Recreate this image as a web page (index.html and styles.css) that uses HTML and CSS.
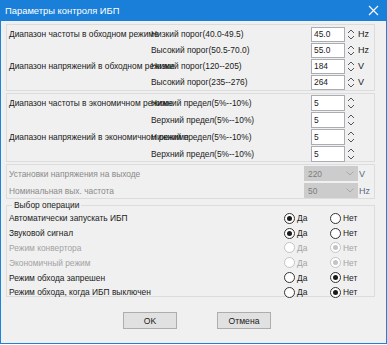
FILE: index.html
```html
<!DOCTYPE html>
<html lang="ru">
<head>
    <meta charset="UTF-8">
    <title>Параметры контроля ИБП</title>
    <link rel="stylesheet" href="styles.css">
</head>
<body>
    <div class="window">
        <div class="titlebar">
            <span class="title">Параметры контроля ИБП</span>
            <svg class="close" width="11" height="11" viewBox="0 0 11 11">
                <path d="M1 1L10 10M10 1L1 10" stroke="#fff" stroke-width="1.1" fill="none"/>
            </svg>
        </div>
        <div class="content">
            <div class="group bypass">
                <div class="row">
                    <span class="cap">Диапазон частоты в обходном режиме</span>
                    <span class="lbl">Низкий порог(40.0-49.5)</span>
                    <span class="field">45.0</span>
                    <svg class="spin" width="8" height="13" viewBox="0 0 8 13"><path d="M1 5L4 2L7 5M1 8L4 11L7 8" stroke="#555" fill="none"/></svg>
                    <span class="unit">Hz</span>
                </div>
                <div class="row">
                    <span class="cap"></span>
                    <span class="lbl">Высокий порог(50.5-70.0)</span>
                    <span class="field">55.0</span>
                    <svg class="spin" width="8" height="13" viewBox="0 0 8 13"><path d="M1 5L4 2L7 5M1 8L4 11L7 8" stroke="#555" fill="none"/></svg>
                    <span class="unit">Hz</span>
                </div>
                <div class="row">
                    <span class="cap">Диапазон напряжений в обходном режиме</span>
                    <span class="lbl">Низкий порог(120--205)</span>
                    <span class="field">184</span>
                    <svg class="spin" width="8" height="13" viewBox="0 0 8 13"><path d="M1 5L4 2L7 5M1 8L4 11L7 8" stroke="#555" fill="none"/></svg>
                    <span class="unit">V</span>
                </div>
                <div class="row">
                    <span class="cap"></span>
                    <span class="lbl">Высокий порог(235--276)</span>
                    <span class="field">264</span>
                    <svg class="spin" width="8" height="13" viewBox="0 0 8 13"><path d="M1 5L4 2L7 5M1 8L4 11L7 8" stroke="#555" fill="none"/></svg>
                    <span class="unit">V</span>
                </div>
            </div>

            <div class="group eco">
                <div class="row">
                    <span class="cap">Диапазон частоты в экономичном режиме</span>
                    <span class="lbl">Нижний предел(5%--10%)</span>
                    <span class="field">5</span>
                    <svg class="spin" width="8" height="14" viewBox="0 0 8 14"><path d="M1 5L4 2L7 5M1 9L4 12L7 9" stroke="#555" fill="none"/></svg>
                </div>
                <div class="row">
                    <span class="cap"></span>
                    <span class="lbl">Верхний предел(5%--10%)</span>
                    <span class="field">5</span>
                    <svg class="spin" width="8" height="14" viewBox="0 0 8 14"><path d="M1 5L4 2L7 5M1 9L4 12L7 9" stroke="#555" fill="none"/></svg>
                </div>
                <div class="row">
                    <span class="cap">Диапазон напряжений в экономичном режиме</span>
                    <span class="lbl">Нижний предел(5%--10%)</span>
                    <span class="field">5</span>
                    <svg class="spin" width="8" height="14" viewBox="0 0 8 14"><path d="M1 5L4 2L7 5M1 9L4 12L7 9" stroke="#555" fill="none"/></svg>
                </div>
                <div class="row">
                    <span class="cap"></span>
                    <span class="lbl">Верхний предел(5%--10%)</span>
                    <span class="field">5</span>
                    <svg class="spin" width="8" height="14" viewBox="0 0 8 14"><path d="M1 5L4 2L7 5M1 9L4 12L7 9" stroke="#555" fill="none"/></svg>
                </div>
            </div>

            <div class="group output">
                <div class="row">
                    <span class="cap">Установки напряжения на выходе</span>
                    <span class="combo">220<svg width="8" height="5" viewBox="0 0 8 5"><path d="M0.5 0.5L4 4L7.5 0.5" stroke="#a8a8a8" fill="none"/></svg></span>
                    <span class="unit">V</span>
                </div>
                <div class="row">
                    <span class="cap">Номинальная вых. частота</span>
                    <span class="combo">50<svg width="8" height="5" viewBox="0 0 8 5"><path d="M0.5 0.5L4 4L7.5 0.5" stroke="#a8a8a8" fill="none"/></svg></span>
                    <span class="unit">Hz</span>
                </div>
            </div>

            <fieldset class="ops">
                <legend>Выбор операции</legend>
                <div class="row">
                    <span class="cap">Автоматически запускать ИБП</span>
                    <span class="opt"><i class="radio on"></i>Да</span>
                    <span class="opt"><i class="radio"></i>Нет</span>
                </div>
                <div class="row">
                    <span class="cap">Звуковой сигнал</span>
                    <span class="opt"><i class="radio on"></i>Да</span>
                    <span class="opt"><i class="radio"></i>Нет</span>
                </div>
                <div class="row off">
                    <span class="cap">Режим конвертора</span>
                    <span class="opt"><i class="radio"></i>Да</span>
                    <span class="opt"><i class="radio on"></i>Нет</span>
                </div>
                <div class="row off">
                    <span class="cap">Экономичный режим</span>
                    <span class="opt"><i class="radio"></i>Да</span>
                    <span class="opt"><i class="radio on"></i>Нет</span>
                </div>
                <div class="row">
                    <span class="cap">Режим обхода запрешен</span>
                    <span class="opt"><i class="radio"></i>Да</span>
                    <span class="opt"><i class="radio on"></i>Нет</span>
                </div>
                <div class="row">
                    <span class="cap">Режим обхода, когда ИБП выключен</span>
                    <span class="opt"><i class="radio"></i>Да</span>
                    <span class="opt"><i class="radio on"></i>Нет</span>
                </div>
            </fieldset>

            <div class="buttons">
                <button type="button">OK</button>
                <button type="button">Отмена</button>
            </div>
        </div>
    </div>
</body>
</html>
```

FILE: styles.css
```css
body {
    margin: 0;
    font-family: "Liberation Sans", Arial, sans-serif;
    font-size: 8.4px;
    color: #1a1a1a;
    background: #fff;
}
.window {
    width: 387px;
    height: 344px;
    box-sizing: border-box;
    border: 1px solid #1b84d8;
    background: #f0f0f0;
}
.titlebar {
    height: 21px;
    margin: -1px -1px 0;
    background: #1a7fd8;
    color: #fff;
    display: flex;
    align-items: center;
    justify-content: space-between;
    padding: 0 8px 0 5px;
}
.title {
    font-size: 9.4px;
}
.content {
    padding: 3px 11px 0 5px;
}
.group {
    border: 1px solid #dcdcdc;
    padding: 1px 0 0 2px;
}
.group .row {
    display: grid;
    grid-template-columns: 142px 160px 34px 11px auto;
    align-items: center;
    white-space: nowrap;
}
.cap {
    overflow: visible;
}
.bypass {
    height: 64px;
}
.bypass .row {
    height: 16px;
}
.bypass .field {
    height: 13px;
}
.eco {
    margin-top: 2px;
    height: 67px;
    padding-top: 0;
}
.eco .row {
    height: 17px;
}
.eco .field {
    height: 14px;
}
.field {
    box-sizing: content-box;
    width: 30px;
    background: #fff;
    border: 1px solid #abadb3;
    padding-left: 2px;
    line-height: 13px;
}
.eco .field {
    line-height: 14px;
}
.spin {
    margin-left: 2px;
}
.unit {
    padding-left: 2px;
    font-size: 9px;
}
.output {
    margin-top: 2px;
    height: 33px;
    padding-top: 0;
    color: #8a8a8a;
}
.output .row {
    grid-template-columns: 295px 54px auto;
    height: 17px;
}
.output .unit {
    color: #5a6a80;
    padding-left: 1px;
}
.combo {
    height: 15px;
    background: #cccccc;
    color: #7c7c7c;
    display: flex;
    align-items: center;
    justify-content: space-between;
    padding: 0 4px 0 4px;
}
.ops {
    margin: 1px 0 0;
    padding: 0 0 0 2px;
    border: 1px solid #dcdcdc;
    height: 95px;
}
.ops legend {
    padding: 0 2px;
    margin-left: 3px;
    line-height: 10px;
}
.ops .row {
    display: grid;
    grid-template-columns: 275px 46px auto;
    align-items: center;
    height: 14.8px;
    white-space: nowrap;
}
.ops .row:first-of-type {
    margin-top: 1px;
}
.opt {
    display: flex;
    align-items: center;
}
.radio {
    width: 9px;
    height: 9px;
    border: 1px solid #333;
    border-radius: 50%;
    background: #fff;
    margin-right: 2px;
    display: flex;
    align-items: center;
    justify-content: center;
}
.radio.on::after {
    content: "";
    width: 5px;
    height: 5px;
    border-radius: 50%;
    background: #1a1a1a;
}
.off {
    color: #a3a3a3;
}
.off .radio {
    border-color: #c4c4c4;
}
.off .radio.on::after {
    background: #c4c4c4;
}
.buttons {
    display: flex;
    gap: 40px;
    padding: 15px 0 0 117px;
}
button {
    width: 54px;
    height: 17px;
    font-family: inherit;
    font-size: 8.6px;
    color: #1a1a1a;
    background: #e1e1e1;
    border: 1px solid #adadad;
    padding: 0;
}
```
